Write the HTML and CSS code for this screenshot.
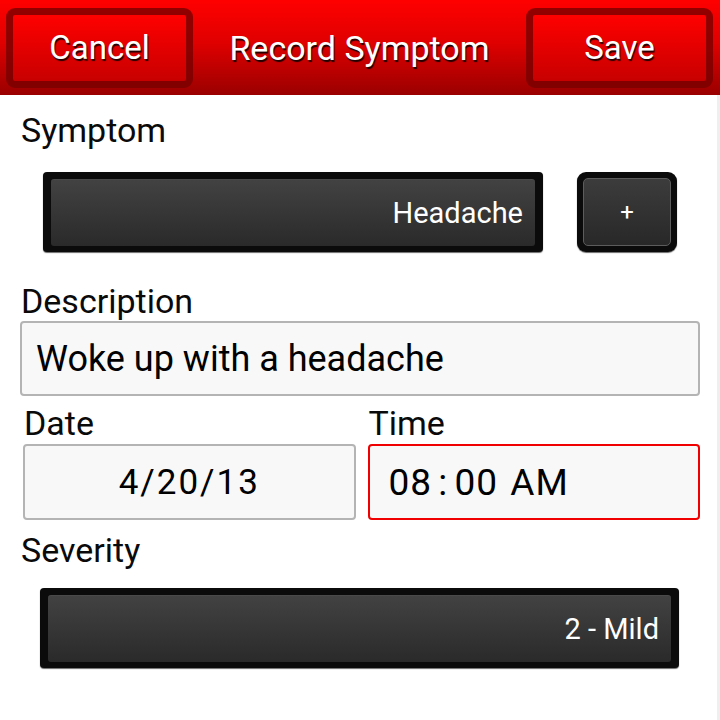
FILE: index.html
```html
<!DOCTYPE html>
<html lang="en">
<head>
    <meta charset="UTF-8">
    <meta name="viewport" content="width=device-width, initial-scale=1.0">
    <title>Record Symptom</title>
    <link rel="stylesheet" href="styles.css">
</head>
<body>
    <div class="app">
        <header class="titlebar">
            <button class="tb-btn" type="button">Cancel</button>
            <h1 class="title">Record Symptom</h1>
            <button class="tb-btn" type="button">Save</button>
        </header>

        <form class="form">
            <label class="label label-symptom">Symptom</label>
            <div class="symptom-row">
                <div class="dropdown dropdown-symptom">
                    <div class="dropdown-face">Headache</div>
                </div>
                <button class="add-btn" type="button">
                    <span class="add-face">+</span>
                </button>
            </div>

            <label class="label label-desc">Description</label>
            <div class="field field-desc">Woke up with a headache</div>

            <div class="datetime">
                <div class="dt-col">
                    <label class="label label-dt">Date</label>
                    <div class="field field-date">4/20/13</div>
                </div>
                <div class="dt-col">
                    <label class="label label-dt">Time</label>
                    <div class="field field-time active">08 : 00  AM</div>
                </div>
            </div>

            <label class="label label-severity">Severity</label>
            <div class="dropdown dropdown-severity">
                <div class="dropdown-face">2 - Mild</div>
            </div>
        </form>
    </div>
</body>
</html>
```

FILE: styles.css
```css
* {
    box-sizing: border-box;
}

body {
    margin: 0;
    font-family: Roboto, "Open Sans", sans-serif;
    background-color: #fff;
    color: #000;
}

.app {
    display: flex;
    flex-direction: column;
    width: 720px;
    height: 720px;
}

/* title bar */
.titlebar {
    display: flex;
    align-items: center;
    height: 95px;
    padding: 0 7px 0 6px;
    background: linear-gradient(#ff0000, #e00000 45%, #9a0000);
}

.tb-btn {
    width: 187px;
    height: 80px;
    padding: 0;
    border: 7px solid rgba(120, 0, 0, 0.8);
    border-radius: 9px;
    background: linear-gradient(#ff0000, #c80000);
    background-clip: padding-box;
    color: #fff;
    font-family: inherit;
    font-size: 33px;
    text-shadow: 1px 2px 1px rgba(0, 0, 0, 0.85);
}

.title {
    flex: 1;
    margin: 0;
    text-align: center;
    color: #fff;
    font-size: 34px;
    font-weight: normal;
    text-shadow: 1px 2px 1px rgba(0, 0, 0, 0.85);
}

/* form */
.form {
    flex: 1;
    display: flex;
    flex-direction: column;
    padding: 0 17px 0 20px;
    border-right: 3px solid #efefef;
}

.label {
    display: block;
    height: 40px;
    line-height: 40px;
    font-size: 34px;
    color: #0a0a0a;
}

.label-symptom {
    margin-top: 15px;
    margin-left: 1px;
}

.label-desc {
    margin-top: 29px;
    margin-left: 1px;
}

.label-dt {
    margin-top: 7px;
    margin-left: 1px;
}

.label-severity {
    margin-top: 10px;
    margin-left: 1px;
}

/* dark drop downs */
.symptom-row {
    display: flex;
    gap: 34px;
    margin-top: 22px;
    margin-left: 23px;
}

.dropdown {
    height: 80px;
    padding: 7px 8px 6px 8px;
    background-color: #0b0b0b;
    border-radius: 4px;
    box-shadow: 0 1px 1px #6a6a6a;
}

.dropdown-symptom {
    width: 500px;
}

.dropdown-severity {
    width: 639px;
    margin-top: 18px;
    margin-left: 20px;
}

.dropdown-face {
    display: flex;
    align-items: center;
    justify-content: flex-end;
    height: 100%;
    padding-right: 12px;
    border-top: 1px solid #4a4a4a;
    border-radius: 3px;
    background: linear-gradient(#424242, #2a2a2a);
    color: #fff;
    font-size: 29px;
}

.add-btn {
    width: 100px;
    height: 80px;
    padding: 6px;
    border: none;
    border-radius: 9px;
    background-color: #0b0b0b;
    box-shadow: 0 1px 1px #6a6a6a;
}

.add-face {
    display: flex;
    align-items: center;
    justify-content: center;
    height: 100%;
    border: 1px solid #5c5c5c;
    border-radius: 5px;
    background: linear-gradient(#3c3c3c, #282828);
    color: #fff;
    font-family: Roboto, sans-serif;
    font-size: 24px;
}

/* light fields */
.field {
    display: flex;
    align-items: center;
    height: 76px;
    border: 2px solid #b4b4b4;
    border-radius: 4px;
    background-color: #f8f8f8;
    color: #000;
}

.field-desc {
    height: 75px;
    padding-left: 14px;
    font-size: 36px;
}

.datetime {
    display: grid;
    grid-template-columns: 1fr 1fr;
    gap: 12px;
    margin-left: 3px;
}

.field-date {
    justify-content: center;
    margin-top: 1px;
    font-size: 35px;
    letter-spacing: 2px;
}

.field-time {
    margin-top: 1px;
    padding-left: 19px;
    font-size: 37px;
    letter-spacing: 1px;
    word-spacing: -4px;
    white-space: pre;
}

.field.active {
    border-color: #f00000;
}
```
